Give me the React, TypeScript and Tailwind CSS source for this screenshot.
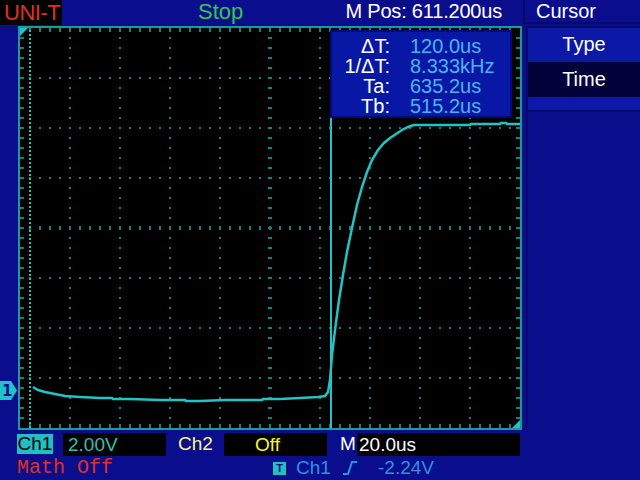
import React from 'react';

const TEAL = '#20c4c4';
const GRID = '#178080';

// waveform points in page coordinates
const wave: [number, number][] = [
  [33, 387], [38, 390], [45, 392], [55, 394], [65, 396], [80, 397], [100, 398], [112, 398], [113, 399], [130, 399],
  [160, 400], [185, 400], [186, 401], [200, 401], [225, 400], [240, 400], [262, 400], [263, 399], [280, 399], [300, 398], [318, 397], [325, 396],
  [328, 392], [330, 380], [332, 355], [335, 330], [339, 300], [343, 275], [347, 252],
  [352, 228], [357, 205], [362, 187], [367, 172], [372, 160], [378, 150], [384, 143],
  [390, 138], [396, 134], [402, 130], [408, 127], [414, 125], [440, 125], [470, 125], [471, 124], [480, 124], [500, 124], [501, 123], [506, 123], [507, 124], [520, 124],
];

function ScopeScreen() {
  const ox = 18;
  const oy = 26;
  const els: React.ReactElement[] = [];

  // major grid dots
  for (let k = 1; k <= 9; k++) {
    const x = 2 + 50 * k;
    for (let y = 12; y < 402; y += 10) {
      els.push(<rect key={`v${k}-${y}`} x={x - 1} y={y - 1} width={2} height={2} fill={GRID} />);
    }
  }
  for (let k = 1; k <= 7; k++) {
    const y = 2 + 50 * k;
    for (let x = 12; x < 502; x += 10) {
      els.push(<rect key={`h${k}-${x}`} x={x - 1} y={y - 1} width={2} height={2} fill={GRID} />);
    }
  }
  // center axis ticks
  for (let y = 12; y < 402; y += 10) {
    els.push(<rect key={`cv${y}`} x={250} y={y - 1} width={4} height={2} fill={GRID} />);
  }
  for (let x = 12; x < 502; x += 10) {
    els.push(<rect key={`ch${x}`} x={x - 1} y={200} width={2} height={4} fill={GRID} />);
  }
  // border ticks
  for (let x = 12; x < 502; x += 10) {
    els.push(<rect key={`bt${x}`} x={x - 1} y={2} width={2} height={4} fill={GRID} />);
    els.push(<rect key={`bb${x}`} x={x - 1} y={398} width={2} height={4} fill={GRID} />);
  }
  for (let y = 12; y < 402; y += 10) {
    els.push(<rect key={`bl${y}`} x={2} y={y - 1} width={4} height={2} fill={GRID} />);
    els.push(<rect key={`br${y}`} x={498} y={y - 1} width={4} height={2} fill={GRID} />);
  }
  // inactive cursor (dotted)
  for (let y = 4; y < 402; y += 4) {
    els.push(<rect key={`tb${y}`} x={11} y={y} width={2} height={2} fill={TEAL} />);
  }

  const pts = wave.map(([x, y]) => `${x - ox},${y - oy}`).join(' ');

  return (
    <svg width={504} height={404} viewBox="0 0 504 404" className="block">
      <rect x={0} y={0} width={504} height={404} fill="#1a9a9a" />
      <rect x={2} y={2} width={500} height={400} fill="#000000" />
      {els}
      <line x1={313} y1={92} x2={313} y2={402} stroke={TEAL} strokeWidth={2} />
      <polyline points={pts} fill="none" stroke={TEAL} strokeWidth={2.5} strokeLinejoin="miter" />
      <polygon points="2,2 10,2 2,10" fill={TEAL} />
      <polygon points="502,402 494,402 502,394" fill={TEAL} />
    </svg>
  );
}

export default function App() {
  return (
    <div className="w-[640px] h-[480px] overflow-hidden bg-[#0a0e8c] text-white font-['Liberation_Sans','DejaVu_Sans',sans-serif] select-none">
      {/* top bar */}
      <div className="flex h-[26px] items-start">
        <div className="w-[62px] h-[25px] bg-black text-[#e0301c] text-[22px] leading-[25px] pl-[4px] tracking-[-0.5px]">UNI-T</div>
        <div className="w-[136px]" />
        <div className="text-[#30c848] text-[22px] leading-[24px]">Stop</div>
        <div className="flex-1" />
        <div className="text-[20px] leading-[23px] mr-[21px] tracking-[-0.2px]">M Pos: 611.200us</div>
        <div className="w-[117px] h-[24px] border-l-2 border-b-2 border-[#06086a] text-[20px] leading-[22px] pl-[11px]">Cursor</div>
      </div>

      {/* middle */}
      <div className="flex h-[406px]">
        <div className="w-[18px] flex flex-col">
          <div className="h-[355px]" />
          <div className="relative w-[18px] h-[19px]">
            <svg width={18} height={19} viewBox="0 0 18 19" className="block">
              <polygon points="0,0 11,0 17,9.5 11,19 0,19" fill={TEAL} />
            </svg>
            <span className="absolute left-[2px] top-[-1px] text-[15px] font-bold text-[#0a0e8c] font-['DejaVu_Sans',sans-serif]">1</span>
          </div>
        </div>
        <div className="relative w-[504px] h-[404px]">
          <ScopeScreen />
          <div className="absolute left-[312px] top-[4px] w-[182px] h-[88px] bg-[#0818a4] border-2 border-[#06087a] text-[20px] leading-[20px] py-[4px]">
            {[
              ['ΔT:', '120.0us'],
              ['1/ΔT:', '8.333kHz'],
              ['Ta:', '635.2us'],
              ['Tb:', '515.2us'],
            ].map(([k, v]) => (
              <div key={k} className="flex">
                <div className="w-[58px] text-right">{k}</div>
                <div className="pl-[20px] text-[#48b4f0]">{v}</div>
              </div>
            ))}
          </div>
        </div>
        <div className="w-[4px]" />
        <div className="flex-1 flex flex-col border-l-2 border-[#06086a]">
          <div className="h-[36px] bg-[#0c18a6] border-t-2 border-[#06086a] text-[20px] leading-[32px] text-center">Type</div>
          <div className="h-[35px] bg-[#02023a] text-[20px] leading-[34px] text-center">Time</div>
          <div className="h-[15px] bg-[#0c18a6] border-b-2 border-[#06086a]" />
        </div>
      </div>

      {/* bottom row 1 */}
      <div className="flex items-center h-[24px] text-[19px]">
        <div className="ml-[17px] w-[36px] h-[20px] bg-[#20c0c0] text-black leading-[20px] text-center">Ch1</div>
        <div className="ml-[10px] w-[103px] h-[23px] bg-black text-[#30c0b0] leading-[23px] pl-[5px]">2.00V</div>
        <div className="ml-[12px] w-[46px] text-[#f8f880]">Ch2</div>
        <div className="w-[103px] h-[23px] bg-black text-[#f8f828] leading-[23px] pl-[31px]">Off</div>
        <div className="ml-[13px] w-[17px] text-white">M</div>
        <div className="w-[163px] h-[23px] bg-black text-white leading-[23px] pl-[2px]">20.0us</div>
      </div>

      {/* bottom row 2 */}
      <div className="flex items-center h-[24px] text-[19px]">
        <div className="ml-[17px] w-[256px] text-[#e03020] font-['Liberation_Mono',monospace] text-[20px]">Math Off</div>
        <div className="w-[13px] h-[13px] bg-[#20c0c0] text-[#0a0e8c] text-[11px] leading-[13px] text-center font-bold">T</div>
        <div className="ml-[10px] text-[#3090e0] w-[44px]">Ch1</div>
        <svg width={16} height={14} viewBox="0 0 16 14" className="block ml-[2px]">
          <polyline points="1,13 6,13 10,1 15,1" fill="none" stroke="#3090e0" strokeWidth={2} />
        </svg>
        <div className="ml-[20px] text-[#3090e0]">-2.24V</div>
      </div>
    </div>
  );
}
